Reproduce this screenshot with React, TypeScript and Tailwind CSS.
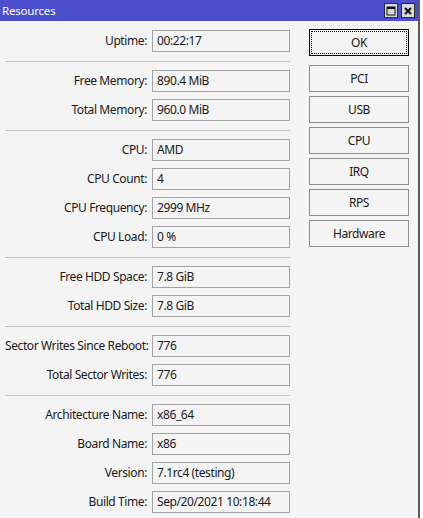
import React from "react";

type Row = { label: string; value: string };

const sections: Row[][] = [
  [{ label: "Uptime:", value: "00:22:17" }],
  [
    { label: "Free Memory:", value: "890.4 MiB" },
    { label: "Total Memory:", value: "960.0 MiB" },
  ],
  [
    { label: "CPU:", value: "AMD" },
    { label: "CPU Count:", value: "4" },
    { label: "CPU Frequency:", value: "2999 MHz" },
    { label: "CPU Load:", value: "0 %" },
  ],
  [
    { label: "Free HDD Space:", value: "7.8 GiB" },
    { label: "Total HDD Size:", value: "7.8 GiB" },
  ],
  [
    { label: "Sector Writes Since Reboot:", value: "776" },
    { label: "Total Sector Writes:", value: "776" },
  ],
  [
    { label: "Architecture Name:", value: "x86_64" },
    { label: "Board Name:", value: "x86" },
    { label: "Version:", value: "7.1rc4 (testing)" },
    { label: "Build Time:", value: "Sep/20/2021 10:18:44" },
  ],
];

const buttons = ["PCI", "USB", "CPU", "IRQ", "RPS", "Hardware"];

function Field({ label, value }: Row) {
  return (
    <div className="flex h-[22px] items-center">
      <div className="w-[142px] whitespace-nowrap text-right">{label}</div>
      <div className="ml-[5px] flex h-[22px] w-[138px] items-center border border-[#a3a3a3] bg-[#f4f4f4] pl-[4px] whitespace-nowrap">
        {value}
      </div>
    </div>
  );
}

export default function App() {
  return (
    <div
      className="flex h-[518px] w-[423px] bg-white text-[12px] leading-none tracking-[-0.4px] text-[#1a1a1a]"
      style={{ fontFamily: '"Noto Sans", "DejaVu Sans", sans-serif' }}
    >
      <div className="flex h-full w-[420px] flex-col border-r-2 border-[#5c5c5c] bg-[#f4f4f4]">
        <div className="flex h-[21px] items-center justify-between bg-[#4b4fcd] pl-[2px] pr-[3px]">
          <span className="text-[11.5px] tracking-[-0.2px] text-white">Resources</span>
          <div className="flex gap-[3px]">
            <div className="flex h-[15px] w-[14px] items-center justify-center border border-[#2a2a2a] bg-[#d9d9d9]">
              <svg width="10" height="10" viewBox="0 0 10 10">
                <rect x="1" y="1" width="8" height="8" fill="none" stroke="#111" strokeWidth="1" />
                <rect x="1" y="1" width="8" height="2" fill="#111" />
              </svg>
            </div>
            <div className="flex h-[15px] w-[14px] items-center justify-center border border-[#2a2a2a] bg-[#d9d9d9]">
              <svg width="10" height="10" viewBox="0 0 10 10">
                <path d="M2 2 L8 8 M8 2 L2 8" stroke="#111" strokeWidth="2" />
              </svg>
            </div>
          </div>
        </div>
        <div className="flex pt-[9px]">
          <div className="ml-[5px] flex w-[285px] flex-col">
            {sections.map((sec, i) => (
              <React.Fragment key={i}>
                {i > 0 && <div className="mb-[8px] mt-[9px] h-px bg-[#c6c6c6]" />}
                <div className="flex flex-col gap-[7px]">
                  {sec.map((r) => (
                    <Field key={r.label} {...r} />
                  ))}
                </div>
              </React.Fragment>
            ))}
          </div>
          <div className="-mt-px ml-[19px] flex w-[100px] flex-col">
            <div className="flex h-[27px] items-center justify-center border border-black bg-[#f4f4f4] p-px">
              <div className="flex h-full w-full items-center justify-center border border-dotted border-black">
                OK
              </div>
            </div>
            <div className="mt-[9px] flex flex-col gap-[4px]">
              {buttons.map((b) => (
                <div
                  key={b}
                  className="flex h-[27px] items-center justify-center border border-[#8e8e8e] bg-[#f4f4f4]"
                >
                  {b}
                </div>
              ))}
            </div>
          </div>
        </div>
      </div>
    </div>
  );
}
